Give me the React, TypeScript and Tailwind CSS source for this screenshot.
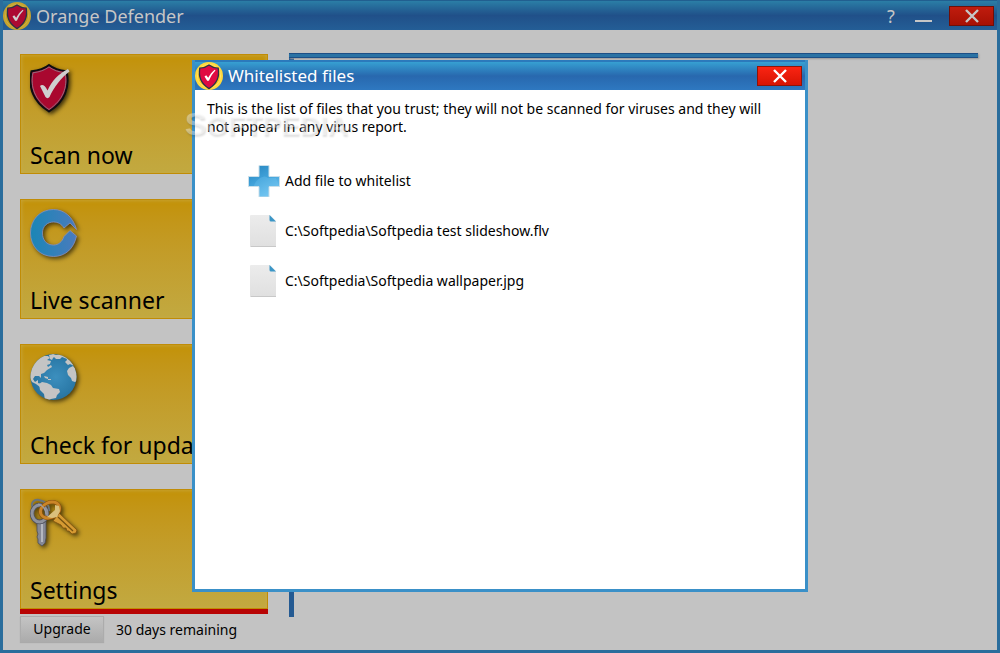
import React, { useId } from 'react';

interface BadgeProps {
  className: string;
  dimmed?: boolean;
}

// Round yellow badge with the shield, used in both title bars
function BadgeLogo({ className, dimmed }: BadgeProps) {
  return (
    <svg viewBox="0 0 28 28" className={className} aria-hidden="true">
      <circle cx="14" cy="14" r="14" fill={dimmed ? '#c6a42e' : '#ffd83c'} />
      <circle cx="14" cy="14" r="11.6" fill={dimmed ? '#c09a14' : '#fbc91e'} stroke={dimmed ? '#cdb04a' : '#ffe46c'} />
      <path
        d="M14 3c2.8 2.2 5.8 3 9.2 3.2 1.5 8.4-1.6 15.8-9.2 20.4C6.4 22 3.3 14.6 4.8 6.2 8.2 6 11.2 5.200 14 3z"
        fill={dimmed ? '#ac0a32' : '#e00a42'}
        stroke="#2b2f4a"
        strokeWidth="1.3"
      />
      <path
        d="M9.500 14.500l1.700-1.200 2 2.500c1.800-3.400 3.800-5.800 6.500-8l.8.8c-2.800 2.800-4.800 6-6.500 10-.7.5-1.500.5-2 0z"
        fill={dimmed ? '#d0d0d0' : '#fff'}
      />
    </svg>
  );
}

function ShieldIcon() {
  return (
    <svg viewBox="0 0 50 54" className="h-[54px] w-[50px] drop-shadow-[2px_2px_2px_rgba(0,0,0,0.7)]" aria-hidden="true">
      <path
        d="M19 2c5 4 10.500 5.500 17.500 6.200C40 24 35 39 19 48.500 3 39-2 24 1.500 8.200 8.500 7.500 14 6 19 2z"
        fill="#a9082f"
        stroke="#0d0d12"
        strokeWidth="2"
      />
      <path d="M19 4c5 3.600 10 5 16 5.800C38 24 33 37 19 46.500 5 37 0 24 3 9.800 9 9 14 7.600 19 4z" fill="none" stroke="#8f8290" strokeWidth="0.8" />
      <path d="M10 23c2-2 5-1 7.500 4.500C22 18 28 11 38 6l1.500 2.500C31 15 24 24 19.500 34c-1 1.500-3 1.500-4 0z" fill="#cfcfcf" />
    </svg>
  );
}

function ScannerIcon() {
  const id = useId();
  return (
    <svg viewBox="0 -1 50 50" className="h-[50px] w-[50px] drop-shadow-[2px_2px_2px_rgba(0,0,0,0.6)]" aria-hidden="true">
      <linearGradient id={id}>
        <stop offset="0" stopColor="#1a86b6" />
        <stop offset="1" stopColor="#4a7bbd" />
      </linearGradient>
      <path
        d="M46.500 20.500C43 7.500 34 .5 23.500 .5 9.500 .5 .5 11 .5 24s9 23.500 23 23.500c12 0 20.500-8 23-20.500L40 21.500l-6 6C32 33 28.500 36 23.500 36c-7 0-11-5-11-12s5-11 11-11c4.500 0 8 2 10.500 6l6-5z"
        fill={`url(#${id})`}
        stroke="#8a91bd"
        strokeWidth="0.8"
      />
    </svg>
  );
}

function GlobeIcon() {
  const id = useId();
  return (
    <svg viewBox="0 -1 50 50" className="h-[50px] w-[50px] drop-shadow-[2px_2px_2px_rgba(0,0,0,0.6)]" aria-hidden="true">
      <radialGradient id={id} cx="0.55" cy="0.5" r="0.55">
        <stop offset="0" stopColor="#3c8fbe" />
        <stop offset="0.7" stopColor="#2c7ba9" />
        <stop offset="1" stopColor="#276f99" />
      </radialGradient>
      <clipPath id={`${id}-clip`}>
        <circle cx="23.5" cy="23" r="23" />
      </clipPath>
      <circle cx="23.5" cy="23" r="23" fill={`url(#${id})`} />
      <g clipPath={`url(#${id}-clip)`} fill="#c4c4c4">
        <path d="M0 18L3 10 8 5l5-3 5 0 2 2-3 2 4 1-1 3-3 1 1 2 3-2 1 2-5 3-3 3-3 1 0 4-2-2-4 0-2 3 2 3 3-2 0 3 3 1 2 3-3 0-4-3-4-2-3-6z" />
        <path d="M19 1l4-1 3 1-3 3-1 2-2-1z M26 1l6-1 5 2 0 3-5-2-2 2-4 0-2-2z M36 3l5 4 3 5-4-2-2 1-3-3 2-2z" />
        <path d="M9 30l3-2 5 1 4 2 2 3 6 1 1 3-3 3-1 3-5 1-3 2-3-1-1-6-4-4z" />
        <path d="M39 14l4-2 4 4 1 10-3 2-3-1-1-3-3-3-1-4z M14 22l4 1 0 2-3-1z M18 25l3 0 0 1-3 0z" />
      </g>
    </svg>
  );
}

function KeysIcon() {
  return (
    <svg viewBox="0 -1 50 50" className="h-[50px] w-[50px] drop-shadow-[2px_2px_2px_rgba(0,0,0,0.6)]" aria-hidden="true">
      <path d="M3 9C0 4 4 0 9 1c6 1 11 5 10 11" fill="none" stroke="#6b747a" strokeWidth="2" />
      <path d="M7 21h9l0 18-1 5-3 3-4-3 0-4-1-2 1-3-1-3z" fill="#858895" stroke="#4c4f5b" strokeWidth="0.8" />
      <path d="M12 25v18" stroke="#c5c7cf" strokeWidth="1.5" />
      <ellipse cx="9.5" cy="14.5" rx="7.500" ry="8.500" fill="none" stroke="#50535f" strokeWidth="4.500" />
      <ellipse cx="9.5" cy="14.5" rx="7.500" ry="8.500" fill="none" stroke="#8f929d" strokeWidth="3" />
      <path d="M29 14l18 17-1 3-4 1-3-3-2 0-1-3-3 0-2-3-8-4z" fill="#d69a32" stroke="#80530c" strokeWidth="0.8" />
      <path d="M28 18l15 14" stroke="#73500f" strokeWidth="1.200" />
      <ellipse cx="20" cy="11" rx="10" ry="7.500" transform="rotate(-25 20 11)" fill="none" stroke="#8b5110" strokeWidth="4" />
      <ellipse cx="20" cy="11" rx="10" ry="7.500" transform="rotate(-25 20 11)" fill="none" stroke="#ca8528" strokeWidth="2.800" />
      <path d="M17 18l8-7 0-5 4 1 1 5-3 6-5 1z" fill="#dac07c" />
      <path d="M8 5q7 2 8 10" fill="none" stroke="#9da0a8" strokeWidth="1.2" />
    </svg>
  );
}

function PlusIcon() {
  const id = useId();
  return (
    <svg viewBox="0 0 32 32" className="size-8" aria-hidden="true">
      <linearGradient id={id} x1="0" y1="0" x2="0.5" y2="1">
        <stop offset="0" stopColor="#2583bd" />
        <stop offset="0.5" stopColor="#3fa0d8" />
        <stop offset="1" stopColor="#6bc0ee" />
      </linearGradient>
      <path d="M11 .5h10v11h10.500v10H21v10.500H11V21.500H.5v-10H11z" fill={`url(#${id})`} stroke="#c9dfea" />
      <path d="M6 21q1-5 6-8 5-3 8 0h8l3 8H20v10h-8V21z" fill="#7fd0f8" opacity="0.25" />
    </svg>
  );
}

function FileIcon() {
  const id = useId();
  return (
    <svg viewBox="0 0 32 32" className="size-8" aria-hidden="true">
      <linearGradient id={id} x2="0" y2="1">
        <stop offset="0" stopColor="#ececec" />
        <stop offset="1" stopColor="#e0e0e0" />
      </linearGradient>
      <path d="M3 0h19l6 6v25.500H3q-1 0-1-1V1q0-1 1-1z" fill={`url(#${id})`} />
      <path d="M2.5 31.5H28" stroke="#c8c8c8" />
      <path d="M21.5 0L28 6.500h-5q-1.500 0-1.500-1.500z" fill="#3b96c6" />
    </svg>
  );
}

function CloseIcon({ color }: { color: string }) {
  return (
    <svg viewBox="0 0 14 14" className="size-3.5" aria-hidden="true">
      <path d="M1 1l12 12M13 1L1 13" stroke={color} strokeWidth="2.4" />
    </svg>
  );
}

const menu = [
  { label: 'Scan now', Icon: ShieldIcon },
  { label: 'Live scanner', Icon: ScannerIcon },
  { label: 'Check for updates', Icon: GlobeIcon },
  { label: 'Settings', Icon: KeysIcon },
];

const files = ['C:\\Softpedia\\Softpedia test slideshow.flv', 'C:\\Softpedia\\Softpedia wallpaper.jpg'];

function WhitelistDialog() {
  return (
    <section
      role="dialog"
      aria-labelledby="whitelist-title"
      className="absolute inset-x-[189px] top-[60px] bottom-[58px] flex flex-col border-x-3 border-b-3 border-[#3a90c8] bg-white"
    >
      <header className="flex h-[30px] shrink-0 items-center border-t-2 border-[#2b7abc] bg-linear-to-b from-[#37a0d2] via-[#2868ae] to-[#2e78c0] pr-[3px]">
        <BadgeLogo className="size-7" />
        <h2 id="whitelist-title" className="ml-[5px] flex-1 text-[17px] leading-6 text-white">Whitelisted files</h2>
        <button
          type="button"
          aria-label="Close whitelist"
          className="flex h-5 w-[45px] items-center justify-center border border-[#901408] bg-linear-to-b from-[#fa2412] to-[#d81404]"
        >
          <CloseIcon color="#fff" />
        </button>
      </header>

      <p className="pt-2.5 pr-8 pl-3 leading-[18px]">
        This is the list of files that you trust; they will not be scanned for viruses and they will not appear in any virus report.
      </p>

      <ul className="mt-[29px] ml-[53px] flex flex-col gap-[18px]">
        <li>
          <button type="button" className="flex items-center gap-[5px]">
            <PlusIcon />
            Add file to whitelist
          </button>
        </li>
        {files.map((file) => (
          <li key={file} className="flex items-center gap-[5px]">
            <FileIcon />
            {file}
          </li>
        ))}
      </ul>
    </section>
  );
}

export default function App() {
  return (
    <div className="relative flex min-h-screen flex-col border-x-3 border-b-3 border-[#2a6d9c] bg-[#c3c3c3] font-['Noto_Sans','Open_Sans',sans-serif] text-sm text-black">
      <header className="flex h-[30px] shrink-0 items-center border-t border-[#215f90] bg-linear-to-b from-[#2b7ea6] via-[#205089] to-[#245e96] pr-[3px] text-[#c6c6c6]">
        <BadgeLogo className="size-7" dimmed />
        <h1 className="ml-[5px] flex-1 text-lg leading-6">Orange Defender</h1>
        <button type="button" aria-label="Help" className="w-6 text-lg leading-6">?</button>
        <button type="button" aria-label="Minimize" className="ml-1.5 flex h-5 w-7 items-end justify-center">
          <span className="mb-1 h-0.5 w-[17px] bg-[#c6c6c6]" />
        </button>
        <button
          type="button"
          aria-label="Close"
          className="ml-3 flex h-5 w-[45px] items-center justify-center border border-[#6f0f08] bg-linear-to-b from-[#c01c0e] to-[#a61004]"
        >
          <CloseIcon color="#c6c6c6" />
        </button>
      </header>

      <main className="flex flex-1 gap-[21px] pt-6 pr-[19px] pl-[17px]">
        <div className="flex w-[248px] shrink-0 flex-col">
          <nav className="flex flex-col gap-[25px]">
            {menu.map(({ label, Icon }) => (
              <button
                key={label}
                type="button"
                className="flex h-[120px] flex-col items-start justify-between border border-[#c08c06] bg-linear-to-b from-[#c39206] to-[#c2a940] pt-2 pb-0.5 pl-[9px] text-left text-[23px] leading-8 shadow-[inset_0_0_4px_#c8aa48]"
              >
                <Icon />
                {label}
              </button>
            ))}
          </nav>
          <div className="h-[5px] bg-[#b80404]" />
          <div className="mt-0.5 flex items-center gap-3">
            <button
              type="button"
              className="h-[26px] w-[84px] border border-[#acacac] bg-linear-to-b from-[#c4c4c4] to-[#acacac] shadow-[0_1px_1px_#aaa]"
            >
              Upgrade
            </button>
            <span className="pt-0.5">30 days remaining</span>
          </div>
        </div>
        <div className="-mt-px mb-[33px] flex-1">
          <div className="h-full border-l-5 border-[#245a92]">
            <div className="-ml-[5px] h-[5px] border-y border-[#1d4f86] bg-[#2a72a4] shadow-[1px_1px_2px_#999]" />
          </div>
        </div>
      </main>

      <WhitelistDialog />

      <span
        aria-hidden="true"
        className="pointer-events-none absolute top-[104px] left-[182px] font-['Liberation_Sans',sans-serif] text-[28px] leading-10 font-bold text-white/40 [text-shadow:1px_2px_2px_rgba(0,0,0,0.12)]"
      >
        <span className="text-[32px]">S</span>OFTPEDIA
        <sup className="text-[8px]">®</sup>
      </span>
    </div>
  );
}
